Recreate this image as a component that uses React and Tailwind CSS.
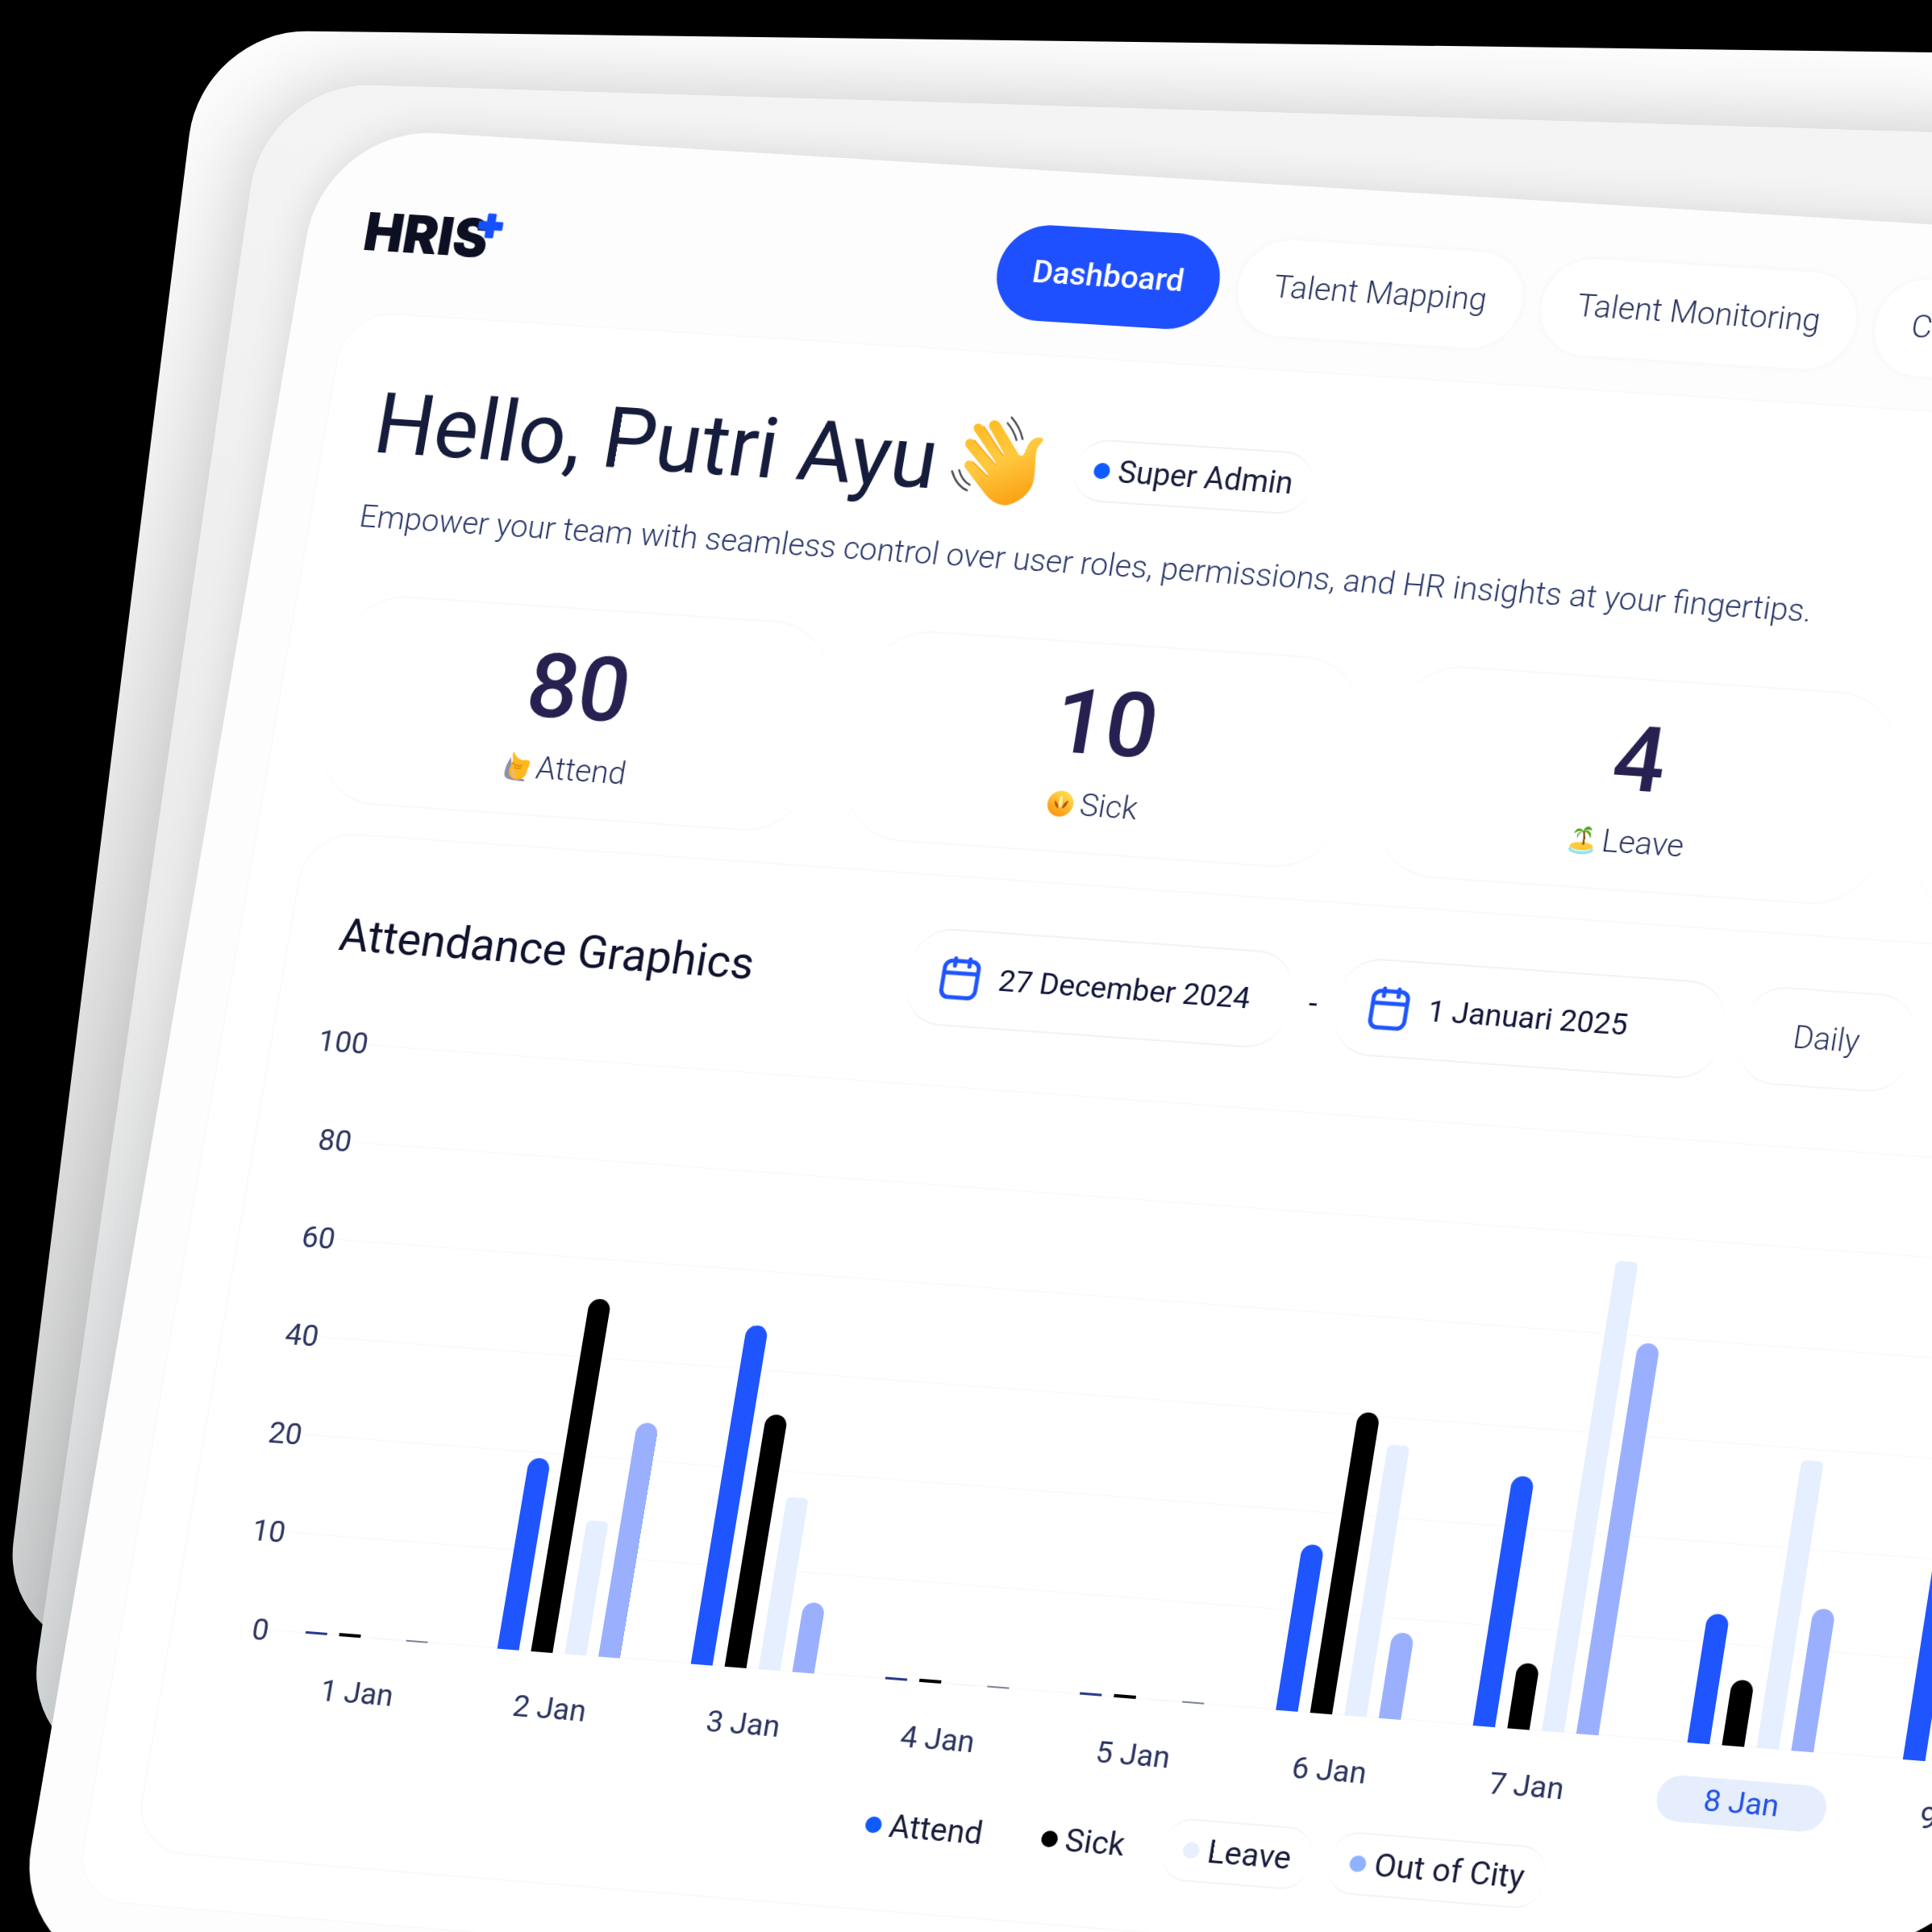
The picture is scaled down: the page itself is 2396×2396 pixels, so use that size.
const NAV = ["Dashboard", "Talent Mapping", "Talent Monitoring", "Calendar"];

const DAYS = [
  { label: "1 Jan", values: [3, 4, 1, 2] },
  { label: "2 Jan", values: [236, 436, 165, 289] },
  { label: "3 Jan", values: [418, 311, 212, 86] },
  { label: "4 Jan", values: [3, 4, 1, 2] },
  { label: "5 Jan", values: [3, 4, 1, 2] },
  { label: "6 Jan", values: [203, 368, 331, 105] },
  { label: "7 Jan", values: [305, 80, 574, 477] },
  { label: "8 Jan", values: [157, 80, 350, 173], active: true },
  { label: "9 Jan", values: [240, 120, 200, 90] },
  { label: "10 Jan", values: [180, 90, 140, 60] },
];

const BAR_COLORS = [
  "bg-[#1f55ff] rounded-t-full",
  "bg-black rounded-t-full",
  "bg-[#e6efff] rounded-t-md",
  "bg-[#9ab0ff] rounded-t-full",
];

const EMPTY_COLORS = ["bg-[#2b3a8c]", "bg-black", "bg-[#eef2fb]", "bg-[#7d82a0]"];

const TICKS = [100, 80, 60, 40, 20, 10, 0];

const LEGEND = [
  { label: "Attend", dot: "bg-[#0f5bff]", chip: "border-transparent" },
  { label: "Sick", dot: "bg-black", chip: "border-transparent" },
  { label: "Leave", dot: "bg-[#e8effd]", chip: "border-[#f3f3f3]" },
  { label: "Out of City", dot: "bg-[#8fb2ff]", chip: "border-[#f3f3f3]" },
];

function Wave() {
  return (
    <svg viewBox="62 62 336 336" className="size-28 shrink-0 overflow-visible" aria-label="Waving hand">
      <defs>
        <linearGradient id="hand" x1="0" y1="0" x2="0.35" y2="1">
          <stop offset="0" stopColor="#ffb91f" />
          <stop offset="0.55" stopColor="#ffc93f" />
          <stop offset="1" stopColor="#fba619" />
        </linearGradient>
      </defs>
      <g transform="translate(230 216) matrix(1.02 -0.06 0.177 1.015 0 0) translate(-230 -230)">
        <path
          fill="url(#hand)"
          d="M110 259C99 241 118 222 137 235L188 287C191 285 192 281 190 277L115 183C101 163 120 141 142 156L218 245C220 243 221 239 219 235L144 121C133 99 160 86 176 105L246 211C249 209 250 206 249 202L200 112C190 88 218 72 236 92L300 200C306 212 314 216 322 208C334 190 337 160 364 148C378 143 392 145 394 152C395 160 376 172 370 192C362 222 367 268 355 312C346 346 296 393 250 394C222 392 196 374 176 347Z"
        />
        <path
          d="M143 156L219 245M179 106L247 211M137 235L189 287"
          fill="none"
          stroke="#f59a12"
          strokeWidth="4"
          strokeLinecap="round"
        />
        <g fill="none" stroke="#4b4b50" strokeWidth="7" strokeLinecap="round">
          <path d="M280 72C299 94 313 121 319 151" />
          <path d="M265 93C280 111 291 132 297 155" />
          <path d="M61 270C70 302 89 329 115 340" />
          <path d="M87 266C93 290 106 310 125 320" />
        </g>
      </g>
    </svg>
  );
}

function RaisedHand() {
  return (
    <svg viewBox="0 0 34 40" className="h-10 w-8 shrink-0" aria-hidden="true">
      <path d="M7 8C3 17 0 28 3 34c4 5 14 4 26 5l1-2-17-6Z" fill="#8f8fae" />
      <path d="M10 1c3 5 7 9 12 10 4 0 8-1 11 1 1 6-2 9-2 15 0 7-6 10-13 10S6 30 8 22c1-5 3-7 2-12-1-3-2-6 0-9Z" fill="#ffb81e" />
      <path d="M10 15c4 4 9 5 14 3M14 21c3 2 6 2 9 0" fill="none" stroke="#e58a12" strokeWidth="2" />
      <path d="M11 25l4 10 3 1-5-12Z" fill="#e8b6a0" />
    </svg>
  );
}

function SickFace() {
  return (
    <svg viewBox="0 0 34 36" className="h-9 w-8 shrink-0" aria-hidden="true">
      <defs>
        <linearGradient id="face" x1="0.7" y1="0" x2="0.2" y2="1">
          <stop offset="0" stopColor="#ffe04d" />
          <stop offset="1" stopColor="#ff8f0f" />
        </linearGradient>
      </defs>
      <circle cx="17" cy="18" r="17" fill="url(#face)" />
      <path d="M9 14c0 5 2 9 6 10 1-3-2-7-6-10ZM20 24c4-1 6-5 7-11-4 2-7 6-7 11Z" fill="#b9560c" />
      <path d="M17 10v11" stroke="#fff2a8" strokeWidth="4" strokeLinecap="round" />
    </svg>
  );
}

function Island() {
  return (
    <svg viewBox="0 0 34 40" className="h-10 w-8 shrink-0" aria-hidden="true">
      <ellipse cx="17" cy="33" rx="16" ry="6.5" fill="#8fe3f2" />
      <ellipse cx="17" cy="29" rx="15" ry="5.5" fill="#ffc83a" />
      <path d="M3 31c8 4 20 4 28 0-2 4-8 5-14 5S5 35 3 31Z" fill="#d9f6e6" />
      <path d="M19 27c0-7 1-12-2-18" fill="none" stroke="#8a5a1c" strokeWidth="2.6" />
      <path d="M17 9C12 4 6 6 5 13c4-4 8-4 12-4Zm0 0C17 2 26 0 28 8c-4-2-8-1-11 1Zm0 0c6-3 12 1 10 9-2-5-5-8-10-9Zm0 0c-6 1-9 5-7 10 1-5 3-8 7-10Z" fill="#4ea51c" />
    </svg>
  );
}

function CalendarIcon() {
  return (
    <svg
      viewBox="0 0 48 54"
      className="h-[54px] w-12 shrink-0"
      fill="none"
      stroke="#1f55ff"
      strokeWidth="5"
      strokeLinecap="round"
      strokeLinejoin="round"
      aria-hidden="true"
    >
      <rect x="3" y="6" width="42" height="45" rx="9" />
      <path d="M3 21h42" strokeLinecap="butt" />
      <path d="M15 3v9M33 3v9" />
    </svg>
  );
}

const STATS = [
  { value: 80, label: "Attend", Icon: RaisedHand },
  { value: 10, label: "Sick", Icon: SickFace },
  { value: 4, label: "Leave", Icon: Island },
  { value: 6, label: "Out of City", Icon: Island },
];

function Logo() {
  return (
    <a
      href="#home"
      className="flex w-[806px] shrink-0 items-start pl-2 font-[Inter,sans-serif] text-[66px] leading-[64px] font-black text-[#0d0f22]"
    >
      HRIS
      <svg viewBox="0 0 32 32" className="-ml-4 size-8" aria-hidden="true">
        <path
          d="M12 2h8v10h10v8H20v10h-8V20H2v-8h10Z"
          fill="#1450ff"
          stroke="#1450ff"
          strokeWidth="3"
          strokeLinejoin="round"
        />
      </svg>
    </a>
  );
}

function DateButton({ children }) {
  return (
    <button
      type="button"
      className="flex h-[120px] w-[472px] shrink-0 items-center gap-6 rounded-[48px] border-y-2 border-[#f2f2f2] px-10 text-[37px] whitespace-nowrap text-[#12163a]"
    >
      <CalendarIcon />
      {children}
    </button>
  );
}

function Chart() {
  return (
    <div className="mt-[73px] flex">
      <div className="flex h-[728px] w-[58px] shrink-0 flex-col justify-between text-[37px] text-[#2c3560]">
        {TICKS.map((t) => (
          <span key={t} className="flex h-0 items-center justify-end">
            {t}
          </span>
        ))}
      </div>
      <div className="grid grow">
        <div className="flex h-[728px] flex-col justify-between [grid-area:1/1]">
          {TICKS.map((t) => (
            <span key={t} className="h-0 border-b-2 border-[#fbfbfb]" />
          ))}
        </div>
        <div className="flex justify-between pl-10 [grid-area:1/1]">
          {DAYS.map((d) => (
            <div key={d.label} className={d.active ? "w-[205px]" : "w-[164px]"}>
              <div className="flex h-[728px] items-end justify-center gap-[15px]">
                {d.values.map((v, i) => (
                  <span
                    key={i}
                    className={"w-[27px] " + (v < 5 ? EMPTY_COLORS[i] : BAR_COLORS[i])}
                    style={{ height: v }}
                  />
                ))}
              </div>
              <div
                className={
                  "mt-10 flex h-14 items-center justify-center rounded-full text-[37px] " +
                  (d.active ? "bg-[#e6eefd] text-[#2452e6]" : "text-[#2c3560]")
                }
              >
                {d.label}
              </div>
            </div>
          ))}
        </div>
      </div>
    </div>
  );
}

function Board() {
  return (
    <div className="w-[119%] origin-top-left overflow-hidden rounded-[140px] rounded-br-[1256px] bg-[#fdfdfd] px-16 pb-20 shadow-[0_0_50px_rgba(0,0,0,0.11)] [grid-area:1/1] [transform:matrix3d(0.97026,0.05797,0,-0.000009269,-0.16968,0.97525,0,-0.000006776,0,0,1,0,403.5,156.8,0,1)]">
      <header className="flex h-[229px] items-center pt-[26px]">
        <Logo />
        <nav className="flex gap-6">
          {NAV.map((n, i) => (
            <button
              key={n}
              type="button"
              className={
                "h-[120px] shrink-0 rounded-full px-11 text-[39px] " +
                (i === 0
                  ? "bg-[#1f50ff] font-medium text-white"
                  : "bg-white font-light text-[#2c3560] shadow-[0_0_10px_rgba(0,0,0,0.04)]")
              }
            >
              {n}
            </button>
          ))}
        </nav>
      </header>

      <main className="rounded-[64px] border-2 border-[#fafafa] bg-white px-[61px] pt-[82px] pb-16">
        <div className="flex h-28 items-center">
          <h1 className="text-[105px] leading-[112px] text-[#161c3b]">Hello, Putri Ayu</h1>
          <span className="ml-5 flex">
            <Wave />
          </span>
          <span className="ml-10 flex h-[78px] items-center gap-[10px] rounded-full border-y-2 border-[#f1f1f1] px-6 text-[38px] text-[#1a1e3c]">
            <span className="size-5 rounded-full bg-[#0f5bff]" />
            Super Admin
          </span>
        </div>
        <p className="mt-9 text-[39px] leading-[48px] font-light text-[#2c3a6b]">
          Empower your team with seamless control over user roles, permissions, and HR insights at your fingertips.
        </p>

        <section className="mt-[72px] grid grid-cols-4 gap-10">
          {STATS.map(({ value, label, Icon }) => (
            <div
              key={label}
              className="flex flex-col items-center gap-5 rounded-[80px] border-y-2 border-[#f9f9f9] pt-10 pb-[34px]"
            >
              <strong className="text-[112px] leading-[116px] font-medium text-[#262150]">{value}</strong>
              <span className="flex items-center gap-2 text-[39px] leading-[48px] font-light text-[#2c3560]">
                <Icon />
                {label}
              </span>
            </div>
          ))}
        </section>

        <section className="mt-[37px] rounded-[64px] border-2 border-[#fafafa] pt-16 pb-16">
          <div className="flex items-center px-[62px]">
            <h2 className="w-[713px] shrink-0 text-[56px] leading-[64px] text-[#10132e]">Attendance Graphics</h2>
            <div className="flex items-center gap-6 text-[38px] text-[#12163a]">
              <DateButton>27 December 2024</DateButton>
              <span>-</span>
              <DateButton>1 Januari 2025</DateButton>
              <button
                type="button"
                className="h-[120px] rounded-[48px] border-y-2 border-[#f5f5f5] px-16 font-light text-[#2c3560]"
              >
                Daily
              </button>
            </div>
          </div>
          <div className="px-[62px]">
            <Chart />
          </div>
          <ul className="mt-[43px] flex justify-center gap-6">
            {LEGEND.map((l) => (
              <li
                key={l.label}
                className={
                  "flex h-[76px] items-center gap-[10px] rounded-[32px] border-y-2 px-6 text-[39px] text-[#1a1e3c] " +
                  l.chip
                }
              >
                <span className={"size-5 rounded-full " + l.dot} />
                {l.label}
              </li>
            ))}
          </ul>
        </section>
      </main>
    </div>
  );
}

export default function App() {
  return (
    <div className="h-screen w-full overflow-hidden bg-black font-[Roboto,sans-serif]">
      <div className="grid w-full grid-cols-1 items-start">
        <div className="h-[2005px] w-[119%] origin-top-left rounded-[130px] bg-linear-to-b from-[#fdfdfd] via-[#e9e9e9] to-[#d2d3d4] [grid-area:1/1] [transform:matrix(1,0.013,-0.125,1,251,37)]" />
        <div className="h-[2085px] w-[119%] origin-top-left rounded-[130px] bg-linear-to-b from-[#f4f4f4] via-[#ebebeb] to-[#d2d5d7] shadow-[0_0_100px_rgba(0,0,0,0.2)] [grid-area:1/1] [transform:matrix(1,0.03,-0.145,1,330,102)]" />
        <Board />
      </div>
    </div>
  );
}
